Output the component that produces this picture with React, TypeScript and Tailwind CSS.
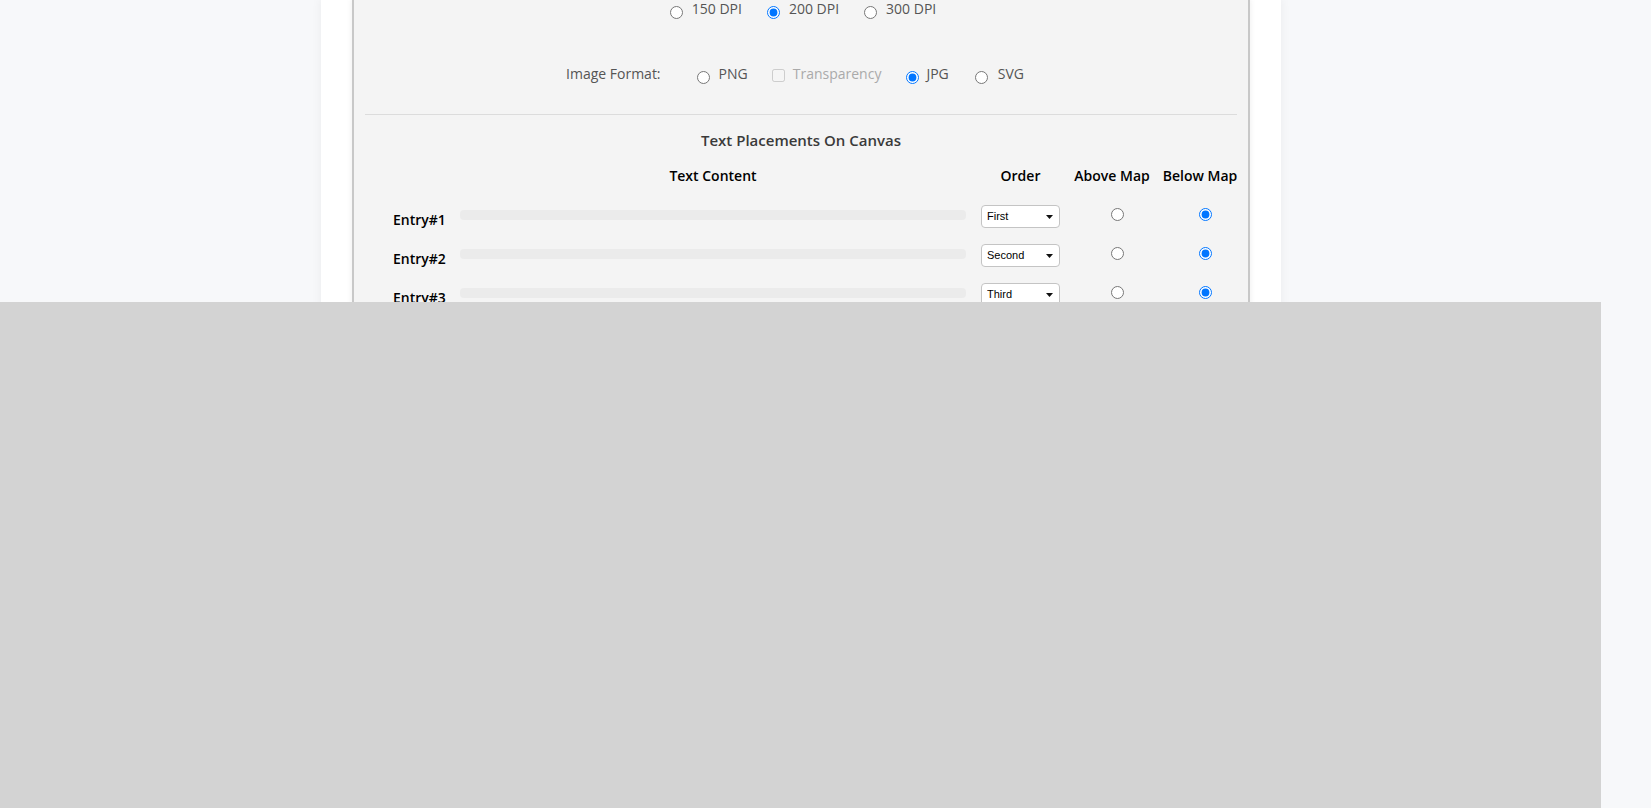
import React from "react";

const entries = [
  { name: "Entry#1", order: "First" },
  { name: "Entry#2", order: "Second" },
  { name: "Entry#3", order: "Third" },
];

function Radio({ checked = false }: { checked?: boolean }) {
  return (
    <input
      type="radio"
      checked={checked}
      readOnly
      className="m-0 block h-[13px] w-[13px]"
    />
  );
}

function OrderSelect({ value }: { value: string }) {
  return (
    <div className="relative ml-[8px] h-[23px] w-[79px]">
      <select
        value={value}
        onChange={() => {}}
        className="block h-full w-full appearance-none rounded-[4px] border border-[#c4c4c4] bg-white pl-[5px] text-[11px] text-black outline-none [font-family:'Liberation_Sans',Arial,sans-serif]"
      >
        <option>First</option>
        <option>Second</option>
        <option>Third</option>
      </select>
      {/* arrow */}
      <svg
        className="pointer-events-none absolute right-[7px] top-[10px]"
        width="7"
        height="4"
        viewBox="0 0 7 4"
      >
        <path d="M0 0 L7 0 L3.5 4 Z" fill="#111" />
      </svg>
    </div>
  );
}

export default function App() {
  return (
    <div className="relative h-[808px] overflow-hidden bg-[#f7f8fa] [font-family:'Open_Sans',sans-serif]">
      <div className="ml-[321px] h-[808px] w-[960px] bg-white px-[31px] shadow-[0_0_10px_rgba(0,0,0,0.06)]">
        <div className="h-full border-x-2 border-[#c8c8c8] bg-[#f4f4f4] shadow-[0_0_6px_rgba(0,0,0,0.08)]">

          {/* DPI */}
          <div className="-mt-px flex h-[20px] items-start justify-center pl-[4px] text-[14px] leading-5 text-[#555]">
            <div className="mt-[7px]"><Radio /></div>
            <span className="ml-[9px]">150 DPI</span>
            <div className="ml-[25px] mt-[7px]"><Radio checked /></div>
            <span className="ml-[9px]">200 DPI</span>
            <div className="ml-[25px] mt-[7px]"><Radio /></div>
            <span className="ml-[9px]">300 DPI</span>
          </div>

          {/* Image format */}
          <div className="mt-[45px] flex h-[20px] items-start justify-center pr-[12px] text-[14px] leading-5 text-[#555]">
            <span>Image Format:</span>
            <div className="ml-[36px] mt-[7px]"><Radio /></div>
            <span className="ml-[9px]">PNG</span>
            <div className="ml-[24px] mt-[5px]">
              <input type="checkbox" disabled className="m-0 block h-[13px] w-[13px]" />
            </div>
            <span className="ml-[8px] text-[#aaa]">Transparency</span>
            <div className="ml-[25px] mt-[7px]"><Radio checked /></div>
            <span className="ml-[7px]">JPG</span>
            <div className="ml-[26px] mt-[7px]"><Radio /></div>
            <span className="ml-[10px]">SVG</span>
          </div>

          <div className="mx-[11px] mt-[30px] h-px bg-[#dcdcdc]" />

          <div className="mt-[13px] text-center text-[15px] font-semibold leading-6 text-[#3a3a3a]">
            Text Placements On Canvas
          </div>

          {/* Table */}
          <div className="mx-[11px] mt-[13px]">
            <div className="grid grid-cols-[88px_520px_95px_88px_88px] text-center text-[14px] font-semibold leading-[22px] text-black">
              <div />
              <div>Text Content</div>
              <div>Order</div>
              <div>Above Map</div>
              <div>Below Map</div>
            </div>

            <div className="mt-[18px]">
              {entries.map((e) => (
                <div
                  key={e.name}
                  className="grid h-[39px] grid-cols-[88px_520px_95px_88px_88px] items-start"
                >
                  <div className="mt-[4px] pl-[28px] text-[14px] font-semibold leading-[22px] text-black">
                    {e.name}
                  </div>
                  <div className="ml-[7px] mt-[5px] h-[10px] w-[506px] rounded-[4px] bg-[#ebebeb]" />
                  <OrderSelect value={e.order} />
                  <div className="ml-[43px] mt-[3px]"><Radio /></div>
                  <div className="ml-[43px] mt-[3px]"><Radio checked /></div>
                </div>
              ))}
            </div>
          </div>
        </div>
      </div>

      {/* overlay */}
      <div className="absolute bottom-0 left-0 top-[302px] w-[1601px] bg-[#d3d3d3]" />
    </div>
  );
}
